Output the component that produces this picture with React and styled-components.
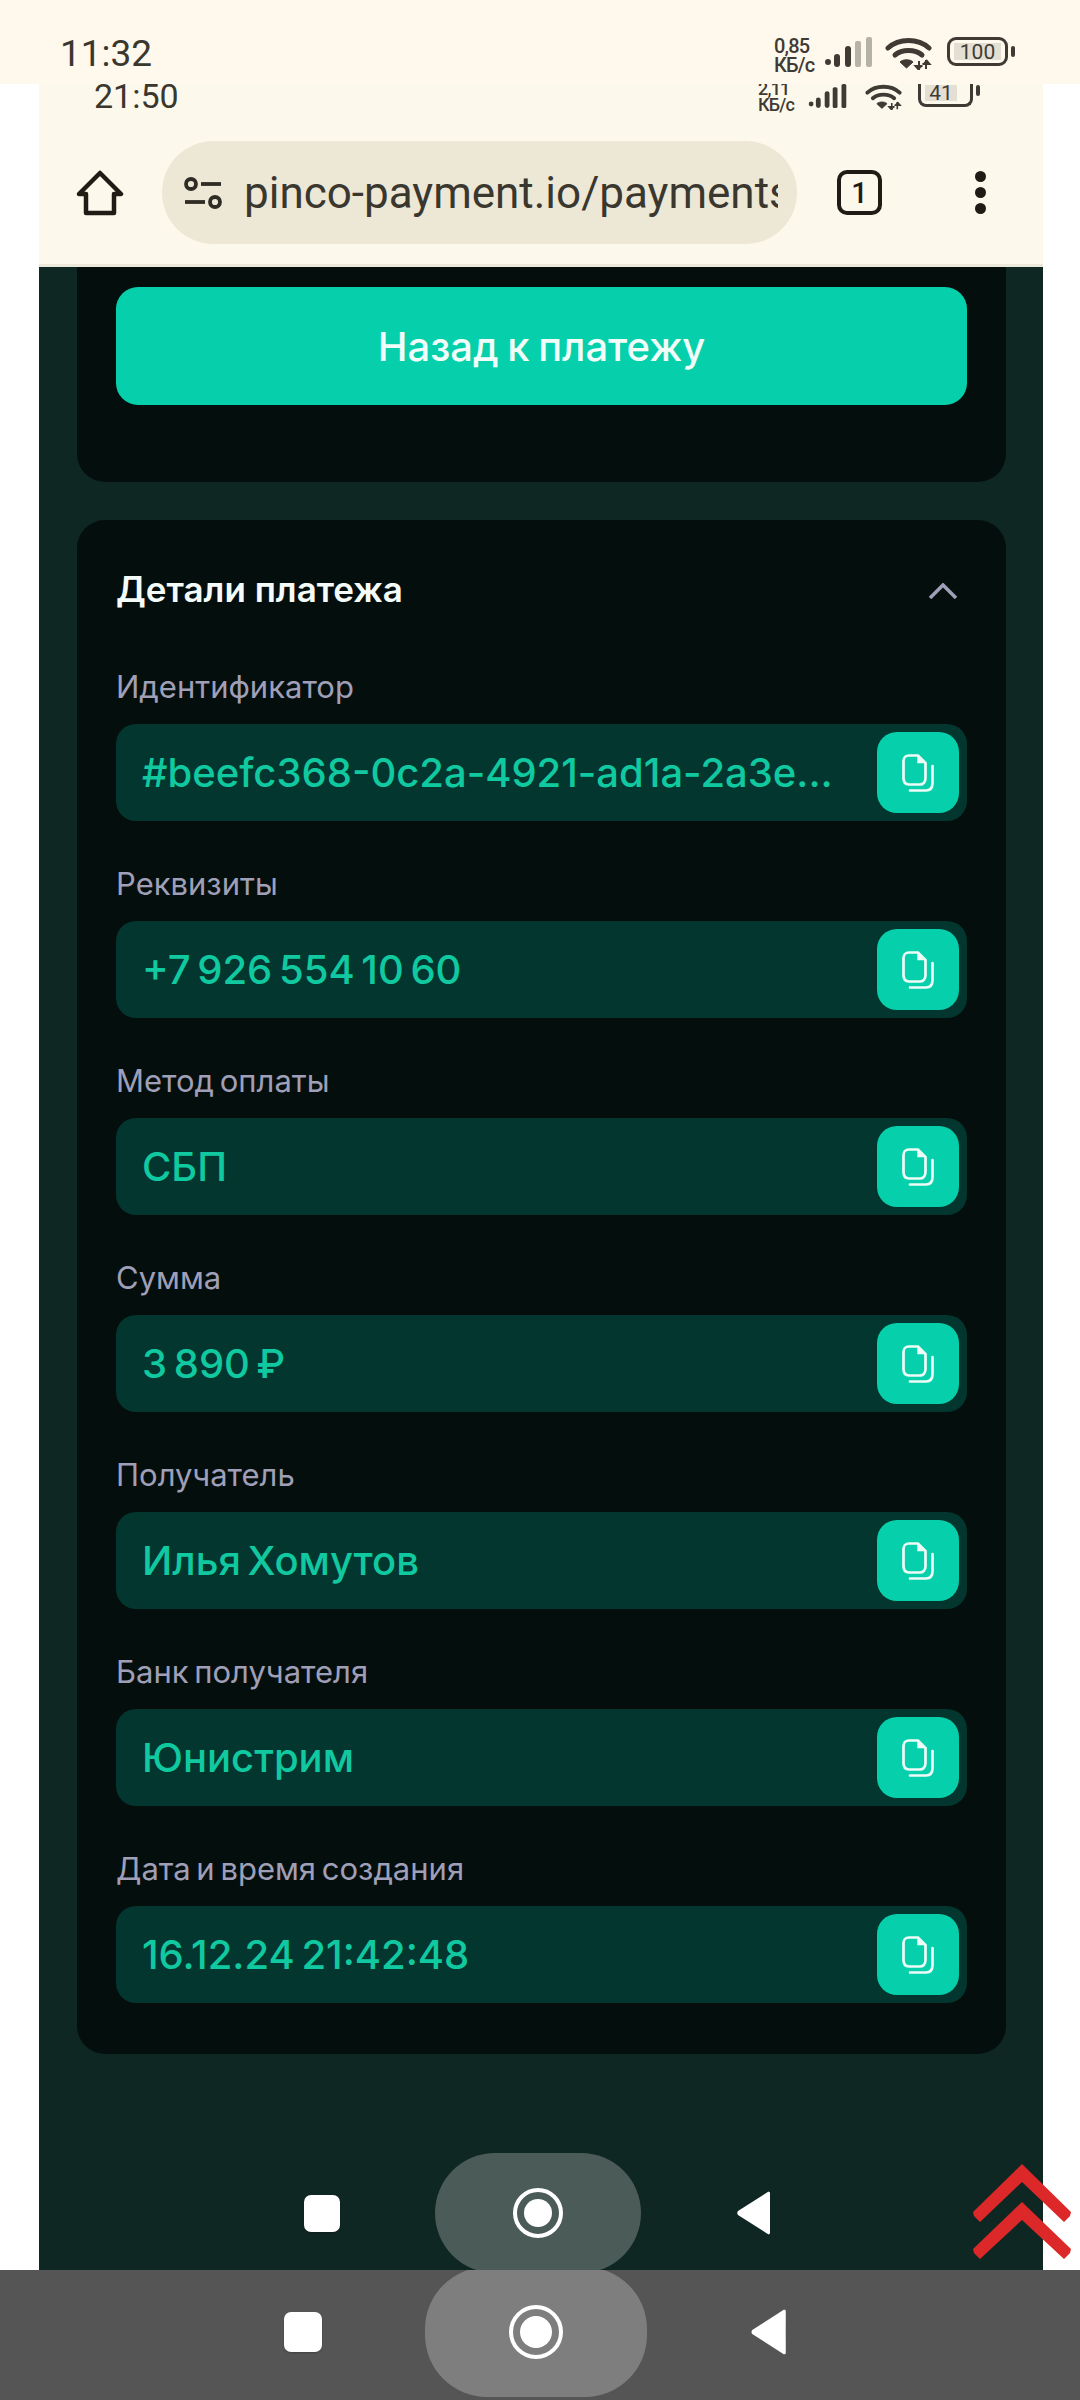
import styled, { createGlobalStyle } from 'styled-components'

const fields = [
  { label: 'Идентификатор', value: '#beefc368-0c2a-4921-ad1a-2a3e...' },
  { label: 'Реквизиты', value: '+7 926 554 10 60' },
  { label: 'Метод оплаты', value: 'СБП' },
  { label: 'Сумма', value: '3 890 ₽' },
  { label: 'Получатель', value: 'Илья Хомутов' },
  { label: 'Банк получателя', value: 'Юнистрим' },
  { label: 'Дата и время создания', value: '16.12.24 21:42:48' },
]

const SignalIcon = ({ width, height, dim }) => (
  <svg width={width} height={height} viewBox="0 0 47 30">
    <circle cx="3" cy="25" r="3" fill="#3f3b34" />
    <rect x="9" y="17" width="6" height="13" rx="3" fill="#3f3b34" />
    <rect x="20" y="9" width="6" height="21" rx="3" fill="#3f3b34" />
    <rect x="30" y="4" width="6" height="26" rx="2" fill={dim ? '#b5b2a8' : '#3f3b34'} />
    <rect x="41" y="0" width="6" height="30" rx="2" fill={dim ? '#b5b2a8' : '#3f3b34'} />
  </svg>
)

const WifiIcon = ({ width, height }) => (
  <svg width={width} height={height} viewBox="0 0 47 33" fill="none">
    <path d="M3 11C14 1 33 1 44 11" stroke="#3f3b34" strokeWidth="5" strokeLinecap="round" />
    <path d="M10 18C17 12 30 12 37 18" stroke="#3f3b34" strokeWidth="5" strokeLinecap="round" />
    <path d="M15 25C18 22 25 22 28 25L21.500 31Z" fill="#3f3b34" stroke="#3f3b34" strokeWidth="1" />
    <path d="M34 24V33M37.500 29H30.500L34 33" fill="#3f3b34" stroke="#3f3b34" strokeWidth="2" />
    <path d="M41 23V32M37.500 27H44.500L41 23" fill="#3f3b34" stroke="#3f3b34" strokeWidth="2" />
  </svg>
)

const CopyIcon = () => (
  <svg width="32" height="38" viewBox="0 0 32 38" fill="none" stroke="#eefcf8" strokeWidth="2.7">
    <path d="M7 1.500H16L23.500 9V24C23.500 28 21 30.500 18 30.500H7C3.500 30.500 1.500 28 1.500 24V7C1.500 4 3.500 1.500 7 1.500Z" />
    <path d="M16 2V8.500H23" fill="#eefcf8" strokeWidth="1.400" />
    <path d="M30.500 12V29C30.500 34 28 36.500 24 36.500H8" strokeLinecap="round" />
  </svg>
)

const HomeIcon = () => (
  <svg width="48" height="46" viewBox="0 0 48 46" fill="none" stroke="#1f1c15" strokeWidth="4.500" strokeLinejoin="round">
    <path d="M24 3L45 24H38V43H10V24H3Z" />
  </svg>
)

const TuneIcon = () => (
  <svg width="40" height="32" viewBox="0 0 40 32" fill="none" stroke="#2f2c25" strokeWidth="3.800">
    <circle cx="8" cy="7" r="5" />
    <path d="M18 7H38" />
    <path d="M2 25H22" />
    <circle cx="32" cy="25" r="5" />
  </svg>
)

const StopIcon = styled.span`
  display: block;
  width: ${p => p.$w}px;
  height: ${p => p.$h}px;
  border-radius: 7px;
  background: #fff;
  box-shadow: 0 1px 2px rgba(0, 0, 0, 0.25);
`

const HomeRing = styled.span`
  display: flex;
  align-items: center;
  justify-content: center;
  width: ${p => p.$size}px;
  height: ${p => p.$size}px;
  border: 4px solid #fff;
  border-radius: 50%;

  &::after {
    content: '';
    width: ${p => p.$size - 22}px;
    height: ${p => p.$size - 22}px;
    border-radius: 50%;
    background: #fff;
  }
`

const BackIcon = ({ width, height }) => (
  <svg width={width} height={height} viewBox="0 0 34 44">
    <path d="M33 1.500V42.500L31.500 43.500L1 24C0 23 0 21 1 20L31.500 0.500Z" fill="#fff" />
  </svg>
)

const ScrollChevrons = () => (
  <ChevronsBox>
    <svg width="98" height="95" viewBox="0 0 98 95" fill="#dc2828">
      <path d="M49 0L98 48L97 52L91 58L49 18L7 58L1 52L0 48Z" />
      <path d="M49 38L98 85L97 89L91 95L49 56L7 95L1 89L0 85Z" />
    </svg>
  </ChevronsBox>
)

const NavButtons = ({ pitch, pillWidth, pillHeight, stopW, stopH, ring, backW, backH, pill }) => (
  <NavGrid $side={2 * pitch - pillWidth} $pill={pillWidth} $h={pillHeight}>
    <NavSlot>
      <StopIcon $w={stopW} $h={stopH} />
    </NavSlot>
    <NavPill $bg={pill}>
      <HomeRing $size={ring} />
    </NavPill>
    <NavSlot>
      <BackIcon width={backW} height={backH} />
    </NavSlot>
  </NavGrid>
)

const App = () => {
  return (
    <Screen>
      <GlobalStyle />
      <OuterStatus>
        <OuterClock>11:32</OuterClock>
        <StatusIcons>
          <Speed>
            <span>0,85</span>
            <span>КБ/с</span>
          </Speed>
          <SignalIcon width={47} height={30} dim />
          <WifiIcon width={47} height={33} />
          <Battery>
            <BatteryFill>100</BatteryFill>
          </Battery>
        </StatusIcons>
      </OuterStatus>

      <Phone>
        <BrowserChrome>
          <InnerStatus>
            <InnerClock>21:50</InnerClock>
            <InnerIcons>
              <InnerSpeed>
                <span>2,11</span>
                <span>КБ/с</span>
              </InnerSpeed>
              <SignalIcon width={45} height={24} />
              <WifiIcon width={43} height={26} />
              <InnerBattery>
                <InnerBatteryFill>41</InnerBatteryFill>
              </InnerBattery>
            </InnerIcons>
          </InnerStatus>
          <Toolbar>
            <HomeIcon />
            <AddressPill>
              <TuneIcon />
              <UrlText>pinco-payment.io/payments</UrlText>
            </AddressPill>
            <TabCounter>1</TabCounter>
            <MenuDots>
              <i />
              <i />
              <i />
            </MenuDots>
          </Toolbar>
        </BrowserChrome>

        <Page>
          <ActionCard>
            <BackButton>Назад к платежу</BackButton>
          </ActionCard>
          <DetailsCard>
            <DetailsHeader>
              <DetailsTitle>Детали платежа</DetailsTitle>
              <CollapseIcon width="30" height="16" viewBox="0 0 30 16" fill="none" stroke="#a09fb8" strokeWidth="3.500">
                <path d="M2 15L15 2L28 15" />
              </CollapseIcon>
            </DetailsHeader>
            <FieldList>
              {fields.map(f => (
                <FieldRow key={f.label}>
                  <FieldLabel>{f.label}</FieldLabel>
                  <FieldBox>
                    <FieldValue>{f.value}</FieldValue>
                    <CopyButton>
                      <CopyIcon />
                    </CopyButton>
                  </FieldBox>
                </FieldRow>
              ))}
            </FieldList>
          </DetailsCard>
          <InnerNav>
            <NavButtons
              pitch={216}
              pillWidth={206}
              pillHeight={120}
              stopW={36}
              stopH={37}
              ring={50}
              backW={34}
              backH={44}
              pill="#4b5b58"
            />
          </InnerNav>
        </Page>
      </Phone>

      <OuterNav>
        <NavButtons
          pitch={233}
          pillWidth={222}
          pillHeight={130}
          stopW={38}
          stopH={40}
          ring={54}
          backW={36}
          backH={46}
          pill="#7e7e7e"
        />
      </OuterNav>
      <ScrollChevrons />
    </Screen>
  )
}
export default App

const GlobalStyle = createGlobalStyle`
  html, body {
    margin: 0;
    padding: 0;
    background: #fff;
  }
  * {
    box-sizing: border-box;
  }
`

const Screen = styled.div`
  position: relative;
  display: flex;
  flex-direction: column;
  width: 1080px;
  height: 2400px;
  overflow: hidden;
  background: #fff;
  font-family: Inter, "Noto Sans", sans-serif;
`

const OuterStatus = styled.div`
  flex: none;
  display: flex;
  justify-content: space-between;
  height: 84px;
  padding: 32px 72px 0 60px;
  background: #fff8ec;
`
const OuterClock = styled.div`
  font-family: Roboto, sans-serif;
  font-size: 37px;
  line-height: 43px;
  color: #3a372f;
`
const StatusIcons = styled.div`
  display: flex;
  align-items: flex-start;
  gap: 13px;
  padding-top: 5px;
`
const Speed = styled.div`
  display: flex;
  flex-direction: column;
  width: 41px;
  margin-right: -3px;
  font-family: Roboto, sans-serif;
  font-size: 20px;
  font-weight: 500;
  line-height: 19px;
  letter-spacing: -0.8px;
  white-space: nowrap;
  color: #3f3b34;
`
const Battery = styled.div`
  position: relative;
  display: flex;
  align-items: center;
  width: 61px;
  height: 29px;
  margin-left: 2px;
  padding: 3px 4px;
  border: 3px solid #3f3b34;
  border-radius: 9px;

  &::after {
    content: '';
    position: absolute;
    right: -10px;
    top: 6px;
    width: 4px;
    height: 11px;
    border-radius: 2px;
    background: #3f3b34;
  }
`
const BatteryFill = styled.div`
  flex: 1;
  height: 17px;
  background: #e3dfd3;
  font-family: Roboto, sans-serif;
  font-size: 21px;
  line-height: 18px;
  text-align: center;
  color: #3f3b34;
`

const Phone = styled.div`
  flex: 1;
  display: flex;
  flex-direction: column;
  min-height: 0;
  margin: 0 37px 0 39px;
`
const BrowserChrome = styled.div`
  flex: none;
  height: 183px;
  background: #fdf8ec;
  border-bottom: 3px solid #ece8da;
  overflow: hidden;
`
const InnerStatus = styled.div`
  display: flex;
  justify-content: space-between;
  height: 57px;
  padding: 0 70px 0 55px;
`
const InnerClock = styled.div`
  font-family: Roboto, sans-serif;
  font-size: 34px;
  line-height: 24px;
  color: #3a372f;
`
const InnerIcons = styled.div`
  display: flex;
  align-items: flex-start;
  gap: 12px;
`
const InnerSpeed = styled.div`
  display: flex;
  flex-direction: column;
  justify-content: flex-end;
  width: 37px;
  height: 29px;
  margin-right: -2px;
  overflow: hidden;
  font-family: Roboto, sans-serif;
  font-size: 18px;
  font-weight: 500;
  line-height: 16px;
  letter-spacing: -0.8px;
  white-space: nowrap;
  color: #3f3b34;
`
const InnerBattery = styled.div`
  position: relative;
  display: flex;
  align-items: flex-end;
  width: 55px;
  height: 23px;
  margin-left: 1px;
  padding: 0 4px 3px;
  border: 3px solid #3f3b34;
  border-top: none;
  border-radius: 0 0 8px 8px;

  &::after {
    content: '';
    position: absolute;
    right: -10px;
    top: 1px;
    width: 4px;
    height: 11px;
    border-radius: 2px;
    background: #3f3b34;
  }
`
const InnerBatteryFill = styled.div`
  width: 32px;
  height: 16px;
  background: #e3dfd3;
  font-family: Roboto, sans-serif;
  font-size: 21px;
  line-height: 16px;
  text-align: center;
  color: #3f3b34;
`
const Toolbar = styled.div`
  display: flex;
  align-items: center;
  height: 103px;
  padding-left: 37px;
`
const AddressPill = styled.div`
  display: flex;
  align-items: center;
  gap: 21px;
  width: 635px;
  height: 103px;
  margin-left: 38px;
  padding: 0 19px 0 21px;
  border-radius: 52px;
  background: #ede7d6;
`
const UrlText = styled.div`
  flex: 1;
  overflow: hidden;
  white-space: nowrap;
  font-family: Roboto, sans-serif;
  font-size: 44px;
  color: #3a372f;
`
const TabCounter = styled.div`
  display: flex;
  align-items: center;
  justify-content: center;
  width: 45px;
  height: 45px;
  margin-left: 40px;
  border: 4px solid #1f1c15;
  border-radius: 10px;
  font-family: Roboto, sans-serif;
  font-size: 29px;
  font-weight: 500;
  color: #1f1c15;
`
const MenuDots = styled.div`
  display: flex;
  flex-direction: column;
  gap: 5px;
  margin-left: 93px;

  i {
    display: block;
    width: 11px;
    height: 11px;
    border-radius: 50%;
    background: #1f1c15;
  }
`

const Page = styled.div`
  flex: 1;
  display: flex;
  flex-direction: column;
  min-height: 0;
  overflow: hidden;
  padding: 0 37px 0 38px;
  background: #0f2723;
`
const ActionCard = styled.div`
  flex: none;
  padding: 20px 39px 77px;
  border-radius: 0 0 28px 28px;
  background: #040f0d;
`
const BackButton = styled.div`
  display: flex;
  align-items: center;
  justify-content: center;
  height: 118px;
  border-radius: 22px;
  background: #05d0ab;
  font-size: 40px;
  font-weight: 500;
  word-spacing: -2px;
  color: #f0fdf9;
`
const DetailsCard = styled.div`
  flex: none;
  margin-top: 38px;
  padding: 39px 39px 51px;
  border-radius: 28px;
  background: #040f0d;
`
const DetailsHeader = styled.div`
  display: flex;
  align-items: center;
  justify-content: space-between;
  height: 60px;
  padding-right: 9px;
  margin-bottom: 46px;
`
const DetailsTitle = styled.div`
  font-size: 35px;
  font-weight: 600;
  color: #f4fbf8;
`
const CollapseIcon = styled.svg`
  margin-top: 4px;
`
const FieldList = styled.div`
  display: flex;
  flex-direction: column;
  gap: 41px;
`
const FieldRow = styled.div`
  display: flex;
  flex-direction: column;
  gap: 15px;
`
const FieldLabel = styled.div`
  height: 44px;
  font-size: 31px;
  line-height: 44px;
  word-spacing: -3px;
  color: #a09fb8;
`
const FieldBox = styled.div`
  display: flex;
  align-items: center;
  justify-content: space-between;
  height: 97px;
  padding: 0 8px 0 26px;
  border-radius: 20px;
  background: #03362e;
`
const FieldValue = styled.div`
  font-size: 40px;
  font-weight: 500;
  word-spacing: -4px;
  white-space: nowrap;
  color: #10c9a0;
`
const CopyButton = styled.div`
  flex: none;
  display: flex;
  align-items: center;
  justify-content: center;
  width: 82px;
  height: 81px;
  border-radius: 20px;
  background: #05d0ab;
`

const InnerNav = styled.div`
  margin-top: auto;
  margin-bottom: -3px;
  padding-right: 8px;
`
const OuterNav = styled.div`
  flex: none;
  height: 130px;
  overflow: hidden;
  padding-right: 8px;
  background: #555555;

  > div {
    margin-top: -3px;
  }
`
const NavGrid = styled.div`
  display: grid;
  grid-template-columns: ${p => p.$side}px ${p => p.$pill}px ${p => p.$side}px;
  justify-content: center;
  height: ${p => p.$h}px;
`
const NavSlot = styled.div`
  display: flex;
  align-items: center;
  justify-content: center;
`
const NavPill = styled(NavSlot)`
  border-radius: 62px;
  background: ${p => p.$bg};
`
const ChevronsBox = styled.div`
  position: absolute;
  left: 973px;
  top: 2164px;
  line-height: 0;
`
